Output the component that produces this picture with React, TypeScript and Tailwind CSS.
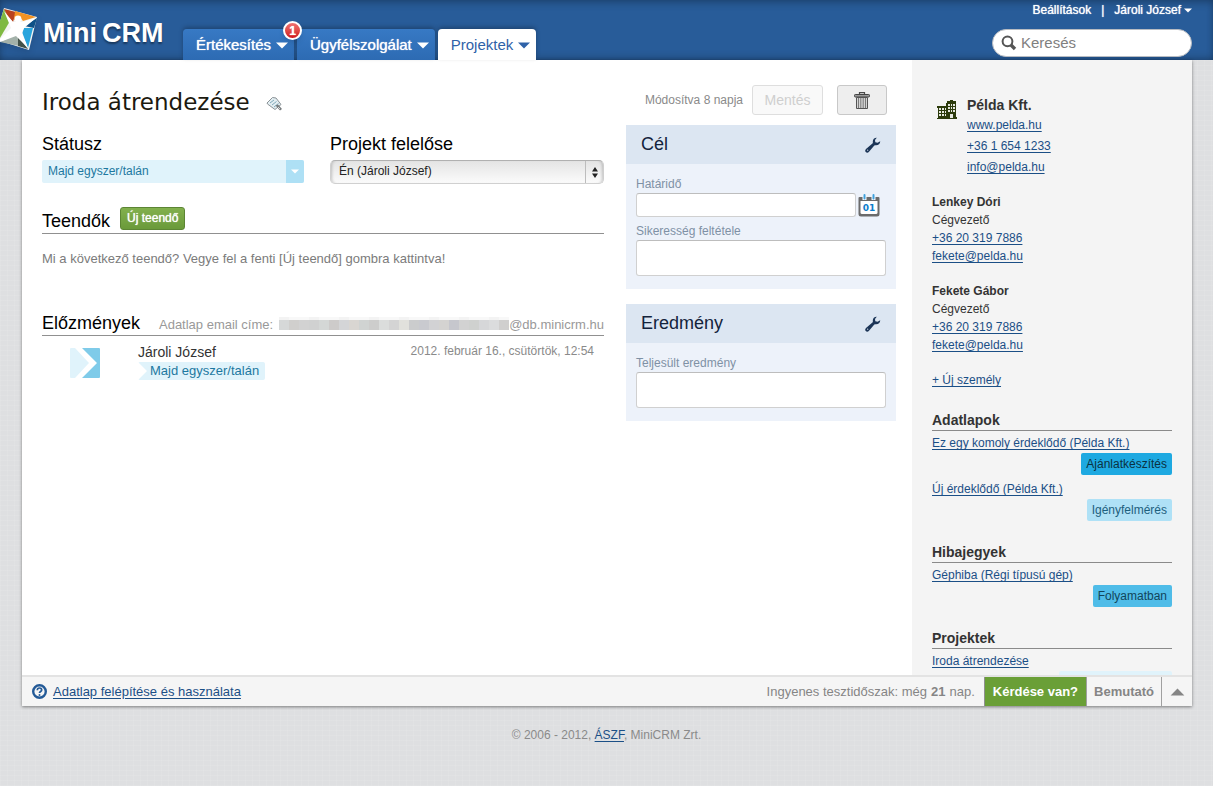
import React from "react";

const linkClass = "text-[#1b4f86] underline underline-offset-2";

function Caret({ className }: { className: string }) {
  return (
    <svg viewBox="0 0 12 7" className={className} aria-hidden="true">
      <path d="M0 0.5H12L6 6.5Z" fill="currentColor" />
    </svg>
  );
}

function Logo() {
  return (
    <svg viewBox="0 0 38 44" className="h-11 w-[38px] shrink-0 drop-shadow-md" aria-hidden="true">
      <path d="M4 0L37 9L29 42L0 33V14Z" fill="#f4f4f2" />
      <path d="M4 1L10 13L0 30V13Z" fill="#7fb941" />
      <path d="M4 1L16 4L13 14L8 9Z" fill="#b9431d" />
      <path d="M15 3L36 9L23 13L20 9L14 12Z" fill="#f39323" />
      <path d="M37 10L34 20L24 18Z" fill="#0f5187" />
      <path d="M24 20L33 20L28 40L22 26Z" fill="#29a5dd" />
      <path d="M0 34L15 27L18 29L19 38Z" fill="#a3b1a9" />
      <path d="M18 28L28 41L18 38Z" fill="#425149" />
      <path d="M4 3L13 14L22 14L36 10L24 20L22 24L28 40L16 28L0 34V31L11 20Z" fill="#ffffff" />
      <circle cx="18" cy="11" r="3.4" fill="#ffffff" />
    </svg>
  );
}

function TagIcon() {
  return (
    <svg viewBox="0 0 17 16" className="h-4 w-[17px]" aria-hidden="true">
      <path d="M1 7L6.500 1.500L10 2L15 8.500L9 13.500L1.500 8Z" fill="#e3eef2" stroke="#8a9296" />
      <path d="M4 7L8 4M6 9L10.500 5.500M8 11L12.500 7.500" stroke="#7fa9ba" />
      <path d="M9.500 9.500L12 8.500L16 13L14 14.500Z" fill="#777c7e" />
      <path d="M12 11L14 13" stroke="#dadada" />
    </svg>
  );
}

function TrashIcon() {
  return (
    <svg viewBox="0 0 16 17" className="h-[17px] w-4" aria-hidden="true">
      <path d="M5.500 2V0.700H10.500V2" fill="none" stroke="#4a4a4a" strokeWidth="1.200" />
      <rect x="0.500" y="2.500" width="15" height="2.500" rx="0.800" fill="#9a9a9a" stroke="#444" />
      <path d="M2.500 5.500H13.500V16.500H2.500Z" fill="#d4d4d4" stroke="#555" />
      <path d="M4.500 6V16M6.800 6V16M9.200 6V16M11.500 6V16" stroke="#7a7a7a" />
    </svg>
  );
}

function WrenchIcon() {
  return (
    <svg viewBox="0 0 16 16" className="h-4 w-4" aria-hidden="true">
      <path
        d="M11.800 0.800C9.300 0.600 7.300 2.800 7.900 5.300L7.700 6.300L1 11.900C-0.100 13 0 14.400 0.800 15.100C1.600 15.900 3 15.900 4 14.800L9.300 8.600L10.400 8.300C13 8.800 15.400 6.600 15.200 4.200L12.600 5.700L10.300 5.200L10 3Z"
        fill="#1c3557"
      />
      <circle cx="2.700" cy="13.200" r="0.600" fill="#dce6f2" />
    </svg>
  );
}

function CalendarIcon() {
  return (
    <svg viewBox="0 0 22 23" className="h-[23px] w-[22px]" aria-hidden="true">
      <path d="M0.500 4Q0.500 3 1.500 3H20.500Q21.500 3 21.500 4V20Q21.500 22.500 19 22.500H3Q0.500 22.500 0.500 20Z" fill="#6b6b6b" />
      <path d="M2.500 7H19.500V18.500Q19.500 20 18 20H4Q2.500 20 2.500 18.500Z" fill="#ffffff" />
      <path d="M4.500 1H8.500V6H4.500ZM13.500 1H17.500V6H13.500Z" fill="#f4f8fc" />
      <path d="M6.500 1V4.500M15.500 1V4.500" stroke="#3da0dd" strokeWidth="2" strokeLinecap="round" />
      <text
        x="11"
        y="17"
        textAnchor="middle"
        fontFamily="DejaVu Sans, sans-serif"
        fontWeight="bold"
        fontSize="9"
        fill="#0c7dcb"
      >
        01
      </text>
    </svg>
  );
}

function BuildingIcon() {
  return (
    <svg viewBox="0 0 20 19" className="h-[19px] w-5" shapeRendering="crispEdges" aria-hidden="true">
      <path d="M0 18H1V8H0V6H9V3H10V1H13V0H16V1H19V3H19V17H20V19H0Z" fill="#2c3b0c" />
      <path
        d="M2 8H4V10H2ZM5 8H7V10H5ZM8 8H9V10H8ZM2 11H4V13H2ZM5 11H7V13H5ZM8 11H9V13H8ZM2 14H4V16H2ZM5 14H7V16H5ZM8 14H9V16H8ZM11 4H13V6H11ZM14 4H15V6H14ZM16 4H18V6H16ZM11 7H13V9H11ZM14 7H15V9H14ZM16 7H18V9H16ZM11 10H13V12H11ZM14 10H15V12H14ZM16 10H18V12H16ZM13 14H16V18H13Z"
        fill="#e6e8e0"
      />
    </svg>
  );
}

function SearchIcon() {
  return (
    <svg viewBox="0 0 16 16" className="h-4 w-4 shrink-0" aria-hidden="true">
      <circle cx="6.500" cy="6.300" r="4.900" fill="none" stroke="#555" strokeWidth="2" />
      <path d="M10 10L14 14" stroke="#555" strokeWidth="3.400" />
    </svg>
  );
}

function StatusIcon() {
  return (
    <svg viewBox="0 0 30 30" className="h-[30px] w-[30px]" aria-hidden="true">
      <path d="M1 0H5L19 15L5 30H1Q0 30 0 29V1Q0 0 1 0Z" fill="#e0f3fb" />
      <path d="M12 0H29Q30 0 30 1V29Q30 30 29 30H12L27 15Z" fill="#7fcbe9" />
    </svg>
  );
}

const maskColors = [
  "#d6d8d8", "#d0cfcd", "#d2d2d2", "#d0d1d1", "#d4d7d6", "#cdcbca", "#d4d5d7", "#d9d6d2", "#d0d3d2",
  "#cdcdcc", "#dbdddc", "#d4d4d4", "#e1e1dc", "#cbcccd", "#c9cacf", "#d2d2d4", "#d4d3d1", "#c6c7cd",
  "#d2d2d2", "#cfd1cf", "#d6d7d9", "#dbdcdd", "#d0cfce",
];

function MaskedAddress() {
  return (
    <svg viewBox="0 0 230 13" className="mt-[3px] h-[13px] w-[230px] shrink-0" shapeRendering="crispEdges" role="img" aria-label="***">
      {maskColors.map((color, i) => (
        <g key={i}>
          <rect x={i * 10} y="0" width="10" height="3" fill={i % 3 === 0 ? "#f3f3f3" : "#f8f8f8"} />
          <rect x={i * 10} y="3" width="10" height="10" fill={color} />
        </g>
      ))}
    </svg>
  );
}

function Tab({ label, active, badge }: { label: string; active?: boolean; badge?: string }) {
  return (
    <a
      href="#"
      className={
        "relative flex h-[31px] items-center gap-[5px] rounded-t-sm pt-px pr-[6px] pl-[13px] text-[15px] shadow-[0_-2px_4px_rgba(0,0,0,0.25)] " +
        (active
          ? "bg-white text-[#2f62a8]"
          : "bg-linear-to-b from-[#3779c4] to-[#2d6bb3] text-white [text-shadow:0_0_1px_#fff]")
      }
    >
      {label}
      <Caret className="h-[7px] w-3" />
      {badge && (
        <span className="absolute -top-2 -right-2 z-10 flex h-[19px] w-[19px] items-center justify-center rounded-full border-2 border-white bg-linear-to-b from-[#f07070] to-[#cf0d17] text-[12px] font-bold text-white shadow-md">
          {badge}
        </span>
      )}
    </a>
  );
}

function Panel({ title, children }: { title: string; children: React.ReactNode }) {
  return (
    <section className="bg-[#edf2fa] text-[12px]">
      <div className="flex h-[39px] items-center justify-between bg-[#dce6f2] px-[15px]">
        <h2 className="text-[18px] text-[#13233c]">{title}</h2>
        <button type="button" aria-label={title + " szerkesztése"}>
          <WrenchIcon />
        </button>
      </div>
      <div className="px-2.5 pt-3 pb-[13px]">{children}</div>
    </section>
  );
}

const fieldLabel = "mb-px block leading-4 text-[#7f91a5]";
const fieldBox =
  "block w-full resize-none rounded-[3px] border border-[#d0d0d0] border-t-[#bdbdbd] bg-white px-1";

function Person({ name }: { name: string }) {
  return (
    <div className="mb-[17px] leading-[18px]">
      <p className="font-bold">{name}</p>
      <p>Cégvezető</p>
      <p><a href="#" className={linkClass}>+36 20 319 7886</a></p>
      <p><a href="#" className={linkClass}>fekete@pelda.hu</a></p>
    </div>
  );
}

function SideSection({ title, children }: { title: string; children: React.ReactNode }) {
  return (
    <section className="mb-[22px]">
      <h3 className="h-5 border-b border-[#8a8a8a] text-[14px] leading-[18px] font-bold">{title}</h3>
      <div className="flex flex-col gap-[5px] pt-[3px]">{children}</div>
    </section>
  );
}

function Sheet({ name, tag, tagClass }: { name: string; tag?: string; tagClass: string }) {
  return (
    <div>
      <p className="leading-[18px]"><a href="#" className={linkClass}>{name}</a></p>
      <p className="mt-px flex justify-end">
        <span className={"min-h-[22px] rounded-[2px] px-[5px] leading-[22px] " + tagClass}>{tag}</span>
      </p>
    </div>
  );
}

export default function App() {
  return (
    <div className="flex h-screen flex-col bg-[#dedfe1] bg-[repeating-linear-gradient(0deg,rgba(255,255,255,0.08)_0_1px,transparent_1px_5px),repeating-linear-gradient(90deg,rgba(255,255,255,0.08)_0_1px,transparent_1px_7px)] font-['Liberation_Sans',Arial,sans-serif] text-[12px] text-[#333]">
      <header className="flex h-[60px] shrink-0 justify-between bg-[#285c99] pr-[21px] shadow-[inset_0_4px_8px_-2px_rgba(0,0,0,0.3),inset_0_-4px_8px_-3px_rgba(0,0,0,0.3)]">
        <div className="flex">
          <a href="#" className="flex w-[183px] items-start pt-2 text-[27px] font-bold text-white">
            <Logo />
            <span className="flex gap-[5px] pt-1.5 pl-[5px] leading-[38px] [text-shadow:0_2px_2px_rgba(0,0,0,0.4)]">
              <span>Mini</span>
              <span>CRM</span>
            </span>
          </a>
          <nav className="flex items-end gap-[3px]">
            <Tab label="Értékesítés" badge="1" />
            <Tab label="Ügyfélszolgálat" />
            <Tab label="Projektek" active />
          </nav>
        </div>
        <div className="flex flex-col items-end">
          <div className="flex h-5 items-center gap-2.5 text-[12px] text-white [text-shadow:0_0_1px_#fff]">
            <a href="#">Beállítások</a>
            <span>|</span>
            <a href="#" className="flex items-center gap-[3px]">
              Jároli József
              <Caret className="h-[5px] w-2" />
            </a>
          </div>
          <label className="mt-[9px] flex h-7 w-[200px] items-center gap-1 rounded-full border border-[#b8bcc2] bg-white pl-2">
            <SearchIcon />
            <input
              type="text"
              aria-label="Keresés"
              placeholder="Keresés"
              className="w-full min-w-0 bg-transparent text-[15px] outline-none placeholder:text-[#808080]"
            />
          </label>
        </div>
      </header>

      <div className="mr-[21px] ml-[22px] flex min-h-0 flex-1 flex-col bg-white shadow-[0_1px_3px_rgba(0,0,0,0.45)]">
        <div className="flex min-h-0 flex-1 overflow-hidden">
          <main className="flex min-w-0 flex-1 gap-[22px] pr-4 pl-5">
            <div className="min-w-0 flex-1 pt-[22px]">
              <div className="flex h-10 items-center gap-4">
                <h1 className="font-['DejaVu_Sans',sans-serif] text-[23px] text-[#1c1a10]">Iroda átrendezése</h1>
                <button type="button" aria-label="Címkék" className="pt-1"><TagIcon /></button>
              </div>

              <div className="mt-2.5 flex gap-[26px]">
                <div className="min-w-0 flex-[262]">
                  <label htmlFor="status" className="block text-[18px] leading-6 text-black">Státusz</label>
                  <div className="relative mt-1">
                    <select
                      id="status"
                      className="block h-[23px] w-full appearance-none rounded-[2px] bg-[#e0f3fb] pr-6 pb-0.5 pl-1.5 text-[12px] text-[#1d78a0]"
                    >
                      <option>Majd egyszer/talán</option>
                    </select>
                    <span className="pointer-events-none absolute inset-y-0 right-0 flex w-[18px] items-center justify-center rounded-r-[2px] bg-[#aee0f5] text-white">
                      <Caret className="h-[5px] w-2" />
                    </span>
                  </div>
                </div>
                <div className="min-w-0 flex-[274]">
                  <label htmlFor="owner" className="block text-[18px] leading-6 text-black">Projekt felelőse</label>
                  <div className="relative mt-1">
                    <select
                      id="owner"
                      className="block h-6 w-full appearance-none rounded-[5px] border border-[#d0d0d0] border-t-[#b0b0b0] bg-linear-to-b from-[#e4e4e4] to-[#fbfbfb] pr-6 pb-0.5 pl-2 text-[12px] text-[#222] shadow-[inset_3px_0_3px_-2px_rgba(0,0,0,0.2),inset_-3px_0_3px_-2px_rgba(0,0,0,0.2)]"
                    >
                      <option>Én (Jároli József)</option>
                    </select>
                    <span className="pointer-events-none absolute inset-y-px right-0 flex w-[19px] items-center justify-center border-l border-[#bdbdbd] text-[#222]">
                      <svg viewBox="0 0 6 11" className="h-[11px] w-1.5" aria-hidden="true">
                        <path d="M0 4.500L3 0L6 4.500ZM0 6.500H6L3 11Z" fill="currentColor" />
                      </svg>
                    </span>
                  </div>
                </div>
              </div>

              <div className="mt-[22px] flex h-7 items-start gap-2.5 border-b border-[#909090]">
                <h2 className="text-[18px] leading-[31px] text-black">Teendők</h2>
                <button
                  type="button"
                  className="mt-px h-[23px] rounded-[3px] border border-[#5c8534] bg-linear-to-b from-[#82b04d] to-[#6a9a3a] px-1.5 pb-0.5 text-[12px] text-white [text-shadow:0_0_1px_#fff]"
                >
                  Új teendő
                </button>
              </div>
              <p className="mt-3.5 text-[13px] leading-[22px] text-[#7b7b7b]">
                Mi a következő teendő? Vegye fel a fenti [Új teendő] gombra kattintva!
              </p>

              <div className="mt-[38px] flex h-7 items-start border-b border-[#909090] text-[13px] whitespace-nowrap text-[#999]">
                <h2 className="text-[18px] leading-[31px] text-black">Előzmények</h2>
                <div className="ml-auto flex pt-1.5 leading-[22px]">
                  <span className="pr-1.5">Adatlap email címe:</span>
                  <MaskedAddress />
                  <span>@db.minicrm.hu</span>
                </div>
              </div>
              <div className="flex items-start pt-1.5 pl-7">
                <span className="mt-1.5"><StatusIcon /></span>
                <div className="ml-[38px] flex-1">
                  <p className="text-[14px] leading-5">Jároli József</p>
                  <p className="flex h-[18px] w-fit items-center rounded-[2px] bg-[#e0f3fb] pr-1.5 pl-3 text-[13px] text-[#1d78a0] [clip-path:polygon(0_0,100%_0,100%_100%,0_100%,9px_50%)]">
                    Majd egyszer/talán
                  </p>
                </div>
                <time className="pr-2.5 leading-[18px] text-[#8a8a8a]">2012. február 16., csütörtök, 12:54</time>
              </div>
            </div>

            <div className="w-[270px] shrink-0 pt-[25px]">
              <div className="mb-2.5 flex items-center justify-end pr-[9px] text-[#8a8a8a]">
                <span className="pr-[9px]">Módosítva 8 napja</span>
                <button
                  type="button"
                  disabled
                  className="mr-3.5 h-[30px] w-[71px] rounded-[3px] border border-[#dedede] bg-[#f9f9f9] text-[14px] text-[#cfcfcf]"
                >
                  Mentés
                </button>
                <button
                  type="button"
                  aria-label="Törlés"
                  className="flex h-[30px] w-[50px] items-center justify-center rounded-[3px] border border-[#c8c8c8] bg-[#eeeeee]"
                >
                  <TrashIcon />
                </button>
              </div>
              <div className="flex flex-col gap-[15px]">
                <Panel title="Cél">
                  <label htmlFor="deadline" className={fieldLabel}>Határidő</label>
                  <div className="mb-1.5 flex h-6 items-center gap-0.5 pr-1.5">
                    <input id="deadline" type="text" className={fieldBox + " h-6 min-w-0"} />
                    <button type="button" aria-label="Naptár" className="shrink-0"><CalendarIcon /></button>
                  </div>
                  <label htmlFor="criteria" className={fieldLabel}>Sikeresség feltétele</label>
                  <textarea id="criteria" className={fieldBox + " h-9"} />
                </Panel>
                <Panel title="Eredmény">
                  <label htmlFor="result" className={fieldLabel}>Teljesült eredmény</label>
                  <textarea id="result" className={fieldBox + " h-9"} />
                </Panel>
              </div>
            </div>
          </main>

          <aside className="w-[280px] shrink-0 bg-[#f4f4f4] px-5 pt-9">
            <div className="mb-[15px] flex gap-2.5 pl-[5px]">
              <span className="pt-1"><BuildingIcon /></span>
              <div className="leading-[21px]">
                <p className="text-[14px] leading-[19px] font-bold">Példa Kft.</p>
                <p><a href="#" className={linkClass}>www.pelda.hu</a></p>
                <p><a href="#" className={linkClass}>+36 1 654 1233</a></p>
                <p><a href="#" className={linkClass}>info@pelda.hu</a></p>
              </div>
            </div>
            <Person name="Lenkey Dóri" />
            <Person name="Fekete Gábor" />
            <p className="mb-[22px] leading-[18px]"><a href="#" className={linkClass}>+ Új személy</a></p>
            <SideSection title="Adatlapok">
              <Sheet name="Ez egy komoly érdeklődő (Példa Kft.)" tag="Ajánlatkészítés" tagClass="bg-[#1ea9e1] text-[#0b3242]" />
              <Sheet name="Új érdeklődő (Példa Kft.)" tag="Igényfelmérés" tagClass="bg-[#afe1f6] text-[#1d607e]" />
            </SideSection>
            <SideSection title="Hibajegyek">
              <Sheet name="Géphiba (Régi típusú gép)" tag="Folyamatban" tagClass="bg-[#4fbce8] text-[#12455a]" />
            </SideSection>
            <SideSection title="Projektek">
              <Sheet name="Iroda átrendezése" tagClass="w-[113px] bg-[#e0f3fb]" />
            </SideSection>
          </aside>
        </div>

        <div className="flex h-[31px] shrink-0 items-stretch border-t-2 border-[#e3e3e3] bg-[#f5f5f5] text-[13px] text-[#858585]">
          <a href="#" className="flex items-center gap-1.5 pl-[10px]">
            <svg viewBox="0 0 15 15" className="h-[15px] w-[15px]" aria-hidden="true">
              <circle cx="7.500" cy="7.500" r="6.300" fill="#f5f5f5" stroke="#235a97" strokeWidth="2.400" />
              <path d="M5.300 6.200C5.300 3.300 9.700 3.300 9.700 6C9.700 7.500 7.500 7.500 7.500 9" fill="none" stroke="#235a97" strokeWidth="1.700" />
              <circle cx="7.500" cy="11" r="1" fill="#235a97" />
            </svg>
            <span className={linkClass}>Adatlap felépítése és használata</span>
          </a>
          <p className="ml-auto flex items-center gap-1 pr-[9px]">
            Ingyenes tesztidőszak: még <b>21</b> nap.
          </p>
          <button type="button" className="border-l border-[#909090] bg-[#6a9f37] px-2 font-bold text-white">
            Kérdése van?
          </button>
          <button type="button" className="border-l border-[#a0a0a0] px-[7px] font-bold">Bemutató</button>
          <button type="button" aria-label="Megnyitás" className="flex w-[31px] items-center justify-center border-l border-[#a0a0a0]">
            <Caret className="h-2 w-[15px] rotate-180" />
          </button>
        </div>
      </div>

      <footer className="h-20 shrink-0 pt-5 text-center leading-[18px] text-[#8a8a8a]">
        © 2006 - 2012, <a href="#" className={linkClass}>ÁSZF</a>, MiniCRM Zrt.
      </footer>
    </div>
  );
}
